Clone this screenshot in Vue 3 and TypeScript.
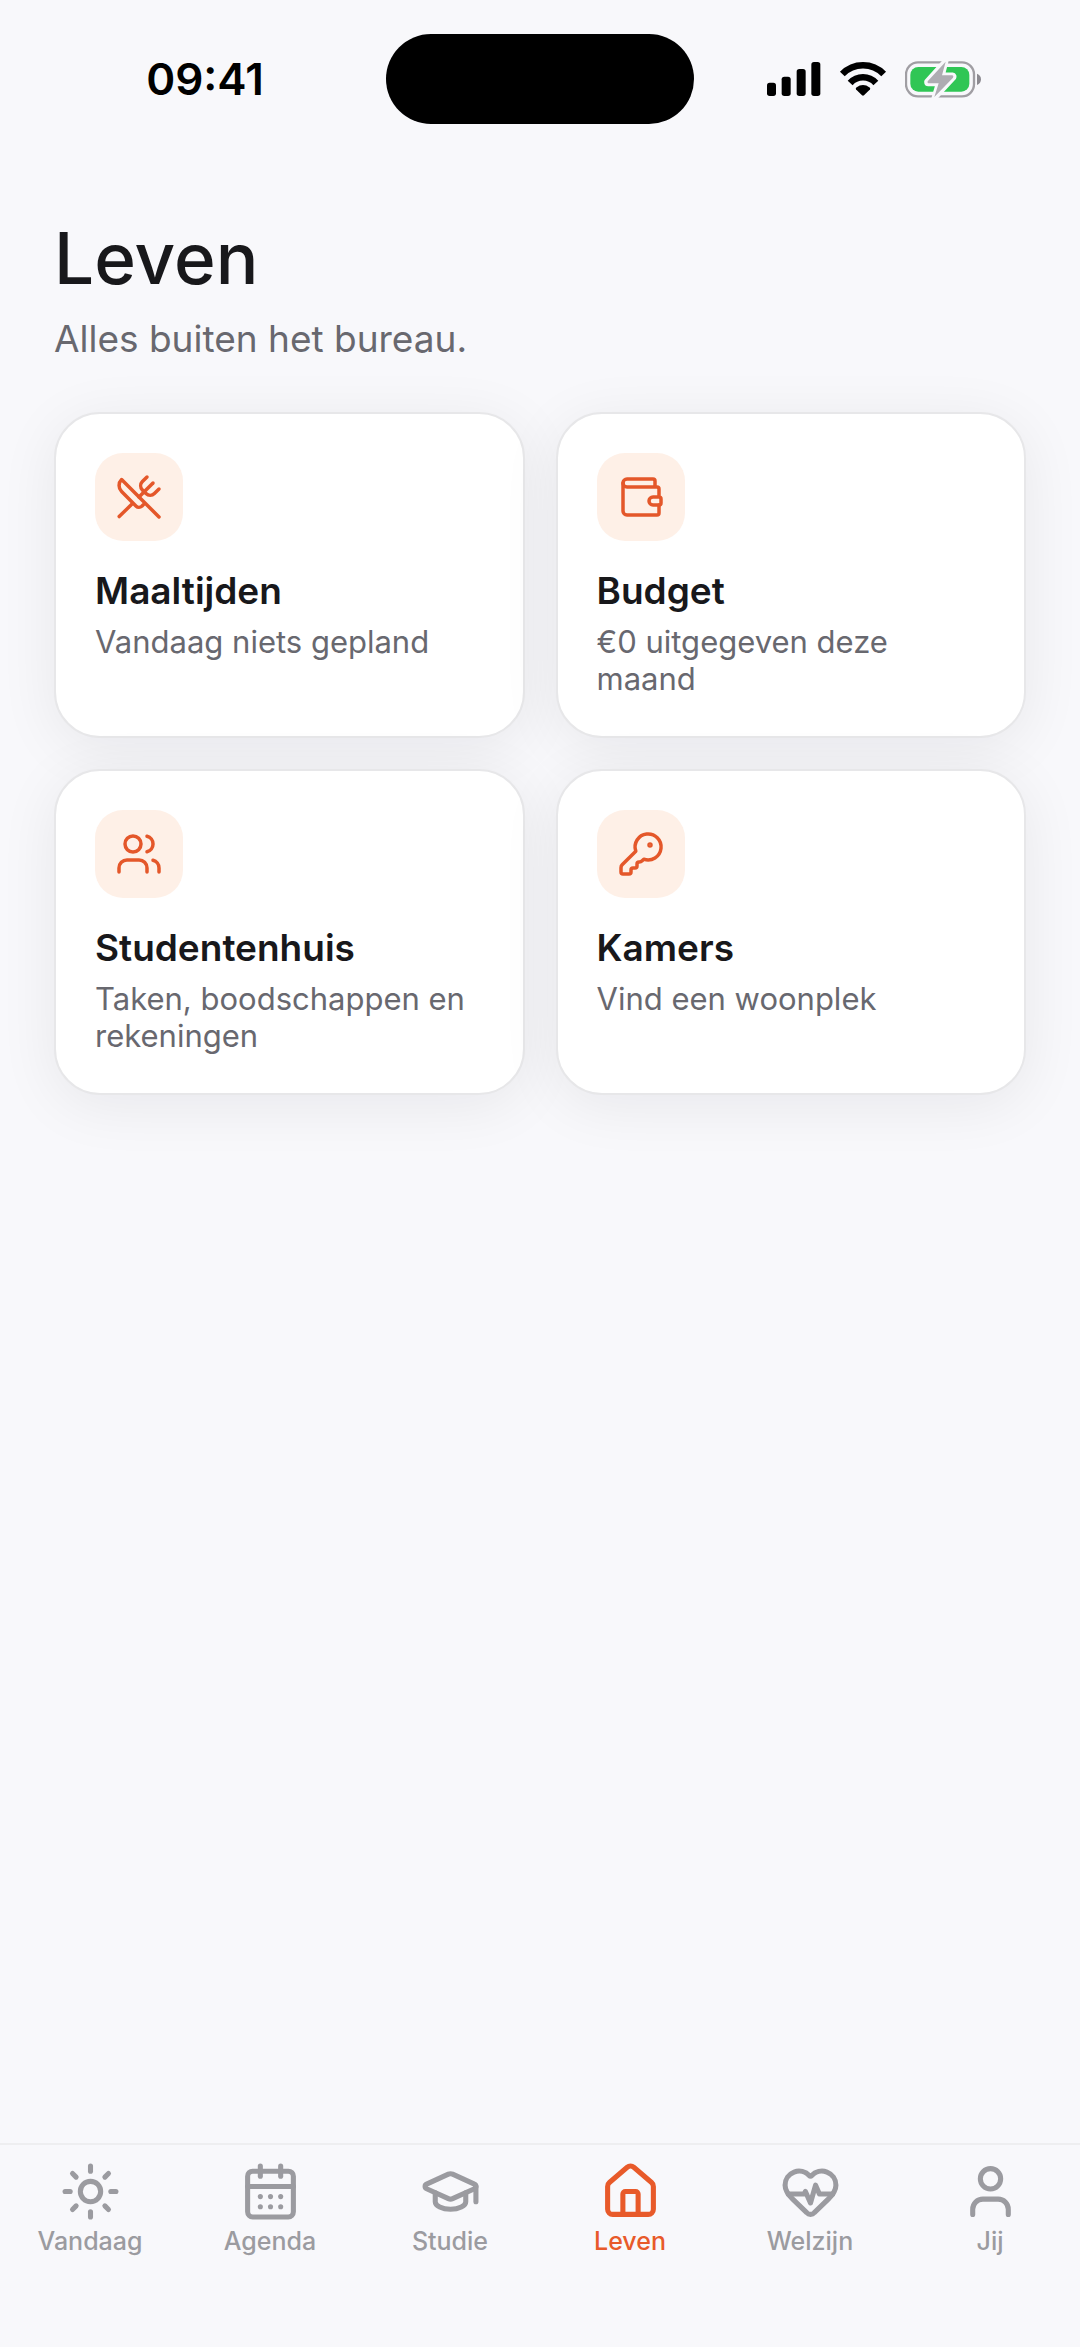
<script setup lang="ts">
interface Tile {
  title: string
  text: string
  icon: string[]
  dot?: boolean
}

interface Tab {
  label: string
  icon: string[]
  active?: boolean
}

const tiles: Tile[] = [
  {
    title: 'Maaltijden',
    text: 'Vandaag niets gepland',
    icon: [
      'm16 2-2.3 2.3a3 3 0 0 0 0 4.2l1.8 1.8a3 3 0 0 0 4.2 0L22 8',
      'M15 15 3.3 3.3a4.2 4.2 0 0 0 0 6l7.3 7.3c.7.7 2 .7 2.8 0L15 15Zm0 0 7 7',
      'm2.1 21.8 6.4-6.3',
      'm19 5-7 7',
    ],
  },
  {
    title: 'Budget',
    text: '€0 uitgegeven deze maand',
    icon: [
      'M19 7V4a1 1 0 0 0-1-1H5a2 2 0 0 0 0 4h15a1 1 0 0 1 1 1v4h-3a2 2 0 0 0 0 4h3a1 1 0 0 0 1-1v-2a1 1 0 0 0-1-1',
      'M3 5v14a2 2 0 0 0 2 2h15a1 1 0 0 0 1-1v-4',
    ],
  },
  {
    title: 'Studentenhuis',
    text: 'Taken, boodschappen en rekeningen',
    icon: [
      'M16 21v-2a4 4 0 0 0-4-4H6a4 4 0 0 0-4 4v2',
      'M5 7a4 4 0 1 0 8 0a4 4 0 1 0-8 0',
      'M22 21v-2a4 4 0 0 0-3-3.87',
      'M16 3.13a4 4 0 0 1 0 7.75',
    ],
  },
  {
    title: 'Kamers',
    text: 'Vind een woonplek',
    icon: [
      'M2.586 17.414A2 2 0 0 0 2 18.828V21a1 1 0 0 0 1 1h3a1 1 0 0 0 1-1v-1a1 1 0 0 1 1-1h1a1 1 0 0 0 1-1v-1a1 1 0 0 1 1-1h.172a2 2 0 0 0 1.414-.586l.814-.814a6.5 6.5 0 1 0-4-4z',
    ],
    dot: true,
  },
]

const tabs: Tab[] = [
  {
    label: 'Vandaag',
    icon: [
      'M8 12a4 4 0 1 0 8 0a4 4 0 1 0-8 0',
      'M12 2v2',
      'M12 20v2',
      'm4.93 4.93 1.41 1.41',
      'm17.66 17.66 1.41 1.41',
      'M2 12h2',
      'M20 12h2',
      'm6.34 17.66-1.41 1.41',
      'm19.07 4.93-1.41 1.41',
    ],
  },
  {
    label: 'Agenda',
    icon: [
      'M8 2v4',
      'M16 2v4',
      'M5 4h14a2 2 0 0 1 2 2v14a2 2 0 0 1-2 2H5a2 2 0 0 1-2-2V6a2 2 0 0 1 2-2z',
      'M3 10h18',
      'M8 14h.01',
      'M12 14h.01',
      'M16 14h.01',
      'M8 18h.01',
      'M12 18h.01',
      'M16 18h.01',
    ],
  },
  {
    label: 'Studie',
    icon: [
      'M21.42 10.922a1 1 0 0 0-.019-1.838L12.83 5.18a2 2 0 0 0-1.66 0L2.6 9.08a1 1 0 0 0 0 1.832l8.57 3.908a2 2 0 0 0 1.66 0z',
      'M22 10v6',
      'M6 12.5V16a6 3 0 0 0 12 0v-3.5',
    ],
  },
  {
    label: 'Leven',
    active: true,
    icon: [
      'M15 21v-8a1 1 0 0 0-1-1h-4a1 1 0 0 0-1 1v8',
      'M3 10a2 2 0 0 1 .709-1.528l7-5.999a2 2 0 0 1 2.582 0l7 5.999A2 2 0 0 1 21 10v9a2 2 0 0 1-2 2H5a2 2 0 0 1-2-2z',
    ],
  },
  {
    label: 'Welzijn',
    icon: [
      'M2 9.5a5.5 5.5 0 0 1 9.591-3.676.56.56 0 0 0 .818 0A5.49 5.49 0 0 1 22 9.5c0 2.29-1.5 4-3 5.5l-5.492 5.313a2 2 0 0 1-3 .019L5 15c-1.5-1.5-3-3.2-3-5.5',
      'M3.22 13H9.5l.5-1 2 4.5 2-7 1.5 3.5h5.27',
    ],
  },
  {
    label: 'Jij',
    icon: [
      'M19 21v-2a4 4 0 0 0-4-4H9a4 4 0 0 0-4 4v2',
      'M8 7a4 4 0 1 0 8 0a4 4 0 1 0-8 0',
    ],
  },
]
</script>

<template>
  <div class="screen">
    <header class="status">
      <time class="clock">09:41</time>
      <div class="island"></div>
      <div class="indicators">
        <svg width="54" height="34" viewBox="0 0 162 102" aria-hidden="true">
          <rect x="0" y="62" width="27" height="40" rx="8" />
          <rect x="44" y="44" width="27" height="58" rx="8" />
          <rect x="89" y="21" width="27" height="81" rx="8" />
          <rect x="133" y="0" width="27" height="102" rx="8" />
        </svg>
        <svg width="48" height="34" viewBox="-2 0 144 103" aria-hidden="true">
          <g fill="none" stroke="#000" stroke-width="20">
            <path d="M7.4 36.6A87 87 0 0 1 132.6 36.6" />
            <path d="M31.1 63.5A52.5 52.5 0 0 1 108.9 63.5" />
          </g>
          <path d="M67 101 49 83Q47 80 50 77Q70 62 90 77Q93 80 91 83L73 101Q70 104 67 101Z" />
        </svg>
        <svg width="76" height="37" viewBox="0 0 228 111" aria-hidden="true">
          <rect x="3" y="4" width="204" height="102" rx="36" fill="none" stroke="#a09ea3" stroke-width="7" />
          <rect x="16" y="18" width="177" height="74" rx="24" fill="#30c655" />
          <path d="M216 38Q228 43 228 55Q228 67 216 72Z" fill="#8c8a90" />
          <path
            d="M122 0 66 62Q66 67 70 67H101L88 111 145 50Q148 44 142 43H111Z"
            fill="#f8f8fb"
            stroke="#f8f8fb"
            stroke-width="17"
            stroke-linejoin="round"
          />
          <path d="M122 2 68 61Q66 66 70 67H101L88 108 144 50Q147 44 142 43H111Z" fill="#aeacb2" />
        </svg>
      </div>
    </header>

    <main class="content">
      <h1>Leven</h1>
      <p class="lead">Alles buiten het bureau.</p>
      <div class="grid">
        <button v-for="tile in tiles" :key="tile.title" type="button" class="card">
          <span class="badge">
            <svg class="icon" viewBox="0 0 24 24" aria-hidden="true">
              <path v-for="d in tile.icon" :key="d" :d="d" />
              <circle v-if="tile.dot" cx="16.5" cy="7.5" r=".5" fill="currentColor" />
            </svg>
          </span>
          <span class="card-title">{{ tile.title }}</span>
          <span class="card-text">{{ tile.text }}</span>
        </button>
      </div>
    </main>

    <nav class="tabs">
      <a
        v-for="tab in tabs"
        :key="tab.label"
        href="#"
        class="tab"
        :class="{ active: tab.active }"
        :aria-current="tab.active ? 'page' : undefined"
      >
        <svg class="icon" viewBox="0 0 24 24" aria-hidden="true">
          <path v-for="d in tab.icon" :key="d" :d="d" />
        </svg>
        <span>{{ tab.label }}</span>
      </a>
    </nav>
  </div>
</template>

<style>
body {
  margin: 0;
  background: #f8f8fb;
}
</style>

<style scoped>
.screen {
  display: flex;
  flex-direction: column;
  min-height: 100vh;
  background: #f8f8fb;
  color: #18181b;
  font-family: Inter, 'Liberation Sans', sans-serif;
}

.status {
  display: grid;
  grid-template-columns: 1fr 308px 1fr;
  align-items: center;
  height: 90px;
  padding: 34px 0 36px;
}

.clock {
  justify-self: center;
  padding-left: 24px;
  color: #000;
  font-size: 44px;
  font-weight: 600;
  line-height: 52px;
}

.island {
  height: 90px;
  border-radius: 45px;
  background: #000;
}

.indicators {
  display: flex;
  align-items: center;
  justify-content: flex-end;
  gap: 18px;
  padding-right: 99px;
}

.icon {
  fill: none;
  stroke: currentColor;
  stroke-linecap: round;
  stroke-linejoin: round;
}

.content {
  flex: 1;
  padding: 58px 54px;
}

h1 {
  margin: 0;
  font-size: 71px;
  font-weight: 500;
  line-height: 80px;
}

.lead {
  margin: 16px 0 48px;
  color: #68686f;
  font-size: 37px;
  line-height: 50px;
}

.grid {
  display: grid;
  grid-template-columns: 1fr 1fr;
  gap: 31px;
}

.card {
  display: flex;
  flex-direction: column;
  align-items: flex-start;
  padding: 39px;
  border: 2px solid #e7e7e9;
  border-radius: 46px;
  background: #fff;
  box-shadow: 0 10px 60px rgba(20, 20, 30, 0.07);
  color: inherit;
  font-family: inherit;
  text-align: left;
}

.badge {
  display: flex;
  align-items: center;
  justify-content: center;
  width: 88px;
  height: 88px;
  margin-bottom: 28px;
  border-radius: 28px;
  background: #fef0e7;
  color: #e4572a;
}

.badge .icon {
  width: 48px;
  height: 48px;
  stroke-width: 1.75;
}

.card-title {
  margin-bottom: 10px;
  font-size: 37px;
  font-weight: 600;
  line-height: 44px;
}

.card-text {
  color: #68686f;
  font-size: 31px;
  line-height: 37px;
}

.tabs {
  display: grid;
  grid-template-columns: repeat(6, 1fr);
  height: 186px;
  padding-top: 16px;
  border-top: 2px solid #eeeef0;
}

.tab {
  display: flex;
  flex-direction: column;
  align-items: center;
  gap: 4px;
  color: #9b9ba0;
  font-size: 25px;
  font-weight: 500;
  line-height: 30px;
  text-decoration: none;
}

.tab .icon {
  width: 61px;
  height: 61px;
  stroke-width: 2;
}

.tab.active {
  color: #e85a2a;
}
</style>
